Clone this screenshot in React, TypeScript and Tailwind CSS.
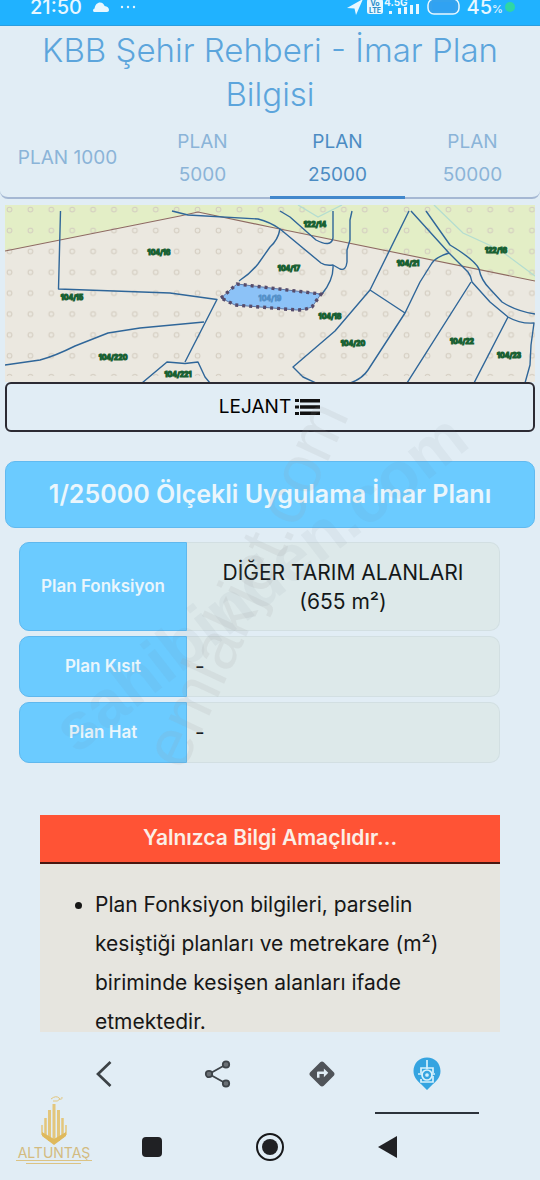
import { MdDirections } from 'react-icons/md';

const tabs = [
  { first: 'PLAN 1000', second: '' },
  { first: 'PLAN', second: '5000' },
  { first: 'PLAN', second: '25000', active: true },
  { first: 'PLAN', second: '50000' },
];

const rows = [
  { label: 'Plan Kısıt', value: '-' },
  { label: 'Plan Hat', value: '-' },
];

const parcelLabels = [
  { x: 159, y: 252, t: '104/16' },
  { x: 72, y: 297, t: '104/15' },
  { x: 113, y: 357, t: '104/220' },
  { x: 178, y: 374, t: '104/221' },
  { x: 315, y: 224, t: '122/14' },
  { x: 289, y: 268, t: '104/17' },
  { x: 408, y: 263, t: '104/21' },
  { x: 496, y: 250, t: '122/16' },
  { x: 330, y: 316, t: '104/18' },
  { x: 353, y: 343, t: '104/20' },
  { x: 462, y: 341, t: '104/22' },
  { x: 509, y: 355, t: '104/23' },
];

function StatusBar() {
  return (
    <header className="flex h-[26px] shrink-0 items-start justify-between overflow-hidden border-b border-[#2a9ee0] bg-[#20b2ff] pl-[30px] pr-[25px] text-[#e8f7ff]">
      <div className="-mt-1 flex h-[22px] items-center gap-[10px]">
        <span className="text-[20px] font-medium leading-[22px]">21:50</span>
        <svg width="18" height="12" viewBox="0 0 18 12" fill="currentColor" aria-hidden="true">
          <path d="M2.5 11C.7 11 .4 8.2 2.6 7.500 3 3.800 5.500 1.500 8 1.500c2.300 0 4 1.500 4.600 3.600 2.600.2 4.400 2 4.400 4 0 1.200-.8 1.900-2 1.900z" />
        </svg>
        <svg width="16" height="4" viewBox="0 0 16 4" fill="currentColor" aria-hidden="true">
          <circle cx="2" cy="2" r="1.200" />
          <circle cx="8" cy="2" r="1.200" />
          <circle cx="14" cy="2" r="1.200" />
        </svg>
      </div>
      <div className="-mt-1 flex h-[22px] items-center">
        <svg width="76" height="22" viewBox="0 0 76 22" fill="currentColor" aria-hidden="true">
          <path d="M0 12 16 3 9 19 7.500 12.500z" />
          <rect x="20" y="3" width="16" height="15" rx="2.500" />
          <text x="28" y="10" fontSize="7" fontWeight="700" textAnchor="middle" fill="#268cc8">Vo</text>
          <text x="28" y="17" fontSize="7" fontWeight="700" textAnchor="middle" fill="#268cc8">LTE</text>
          <text x="37" y="10" fontSize="10" fontWeight="700">4.5G</text>
          <rect x="42" y="15" width="3" height="3" />
          <rect x="51" y="12" width="3" height="6" />
          <rect x="57" y="11" width="3" height="7" />
          <rect x="63" y="9" width="3" height="9" />
          <rect x="69" y="8" width="3" height="10" />
        </svg>
        <svg width="34" height="18" viewBox="0 0 34 18" className="ml-1" aria-hidden="true">
          <rect x="1" y="1" width="31" height="15" rx="6" fill="#35a3ee" stroke="currentColor" strokeWidth="1.500" />
          <rect x="5" y="4" width="23" height="9" rx="3" fill="#30a2f2" />
        </svg>
        <span className="ml-[6px] text-[20px] font-medium leading-[22px]">45</span>
        <span className="mt-1 text-[11px] font-medium">%</span>
        <span className="ml-[2px] size-[10px] rounded-full bg-[#2fd6a5]" />
      </div>
    </header>
  );
}

function PlanMap() {
  return (
    <svg viewBox="5 205 530 177" className="block w-full" role="img" aria-label="İmar plan haritası">
      <defs>
        <pattern id="dots" x="-1" y="199" width="20.900" height="20.900" patternUnits="userSpaceOnUse">
          <circle cx="10.500" cy="10.500" r="2.400" fill="none" stroke="#d3ccc0" strokeWidth="1" />
        </pattern>
      </defs>
      <rect x="5" y="205" width="530" height="178" fill="#ebe8e0" />
      <path d="M5 205H535V281L270 227 198 212 5 251z" fill="#e3eec6" />
      <rect x="5" y="205" width="530" height="171" fill="url(#dots)" />
      <path d="M298 205 318 217 342 205M434 205 463 233 500 250 535 276" fill="none" stroke="#b4ddd0" strokeWidth="1.300" />
      <path d="M5 251 180 216 198 212 270 227 535 281" fill="none" stroke="#8e6a62" strokeWidth="1.100" />
      <g fill="none" stroke="#2f6699" strokeWidth="1.400" strokeLinejoin="round">
        <path d="M60.500 211 58.500 289 170 293 217 299.500 185 362" />
        <path d="M204 322 140 328 108 333 75 346Q55 356 40 360L5 365" />
        <path d="M142 383 167 362 185 363.500 198 362 205 377 210 383" />
        <path d="M172 211 188 215 258 219Q270 222 280 229L321 263Q325 266 333 265L340 269Q346 271 347 262V250L350 240V220L352 211" />
        <path d="M280 229Q278 240 270 247L258 264Q250 274 239 281" />
        <path d="M280 211 290 217 316 240Q331 248 333 238V211M333 265Q334 279 322 294" />
        <path d="M409 211 370 290 335 331 293 367 303 377 316 383M370 290 405 313" />
        <path d="M411 211 449 253 468 272Q471 276 472 282L490 302 508 317Q520 324 534 323L531 345 530 365 525 383" />
        <path d="M449 253Q436 257 432 263L420 282 405 313 368 370Q362 379 350 383" />
        <path d="M426 211 450 245Q475 260 479 269 481 280 490 289L502 302Q516 311 535 314" />
        <path d="M471 282 407 383M508 317 474 383" />
      </g>
      <path d="M221 298 237 284 321 294 312 307Q305 310 297 310L235 305z" fill="#8cc2f7" stroke="#6079a8" strokeWidth="1" />
      <path d="M221 298 237 284 321 294 312 307Q305 310 297 310L235 305z" fill="none" stroke="#564c6b" strokeWidth="3.400" strokeDasharray="3 4" />
      <text x="270" y="301" textAnchor="middle" fontSize="7" fontWeight="700" fill="#5490c8" stroke="#5490c8" strokeWidth=".8">104/19</text>
      <g fontSize="7" fontWeight="700" textAnchor="middle" fill="#174f2c" stroke="#1a6133" strokeWidth="1.200">
        {parcelLabels.map((p) => (
          <text key={p.t} x={p.x} y={p.y + 3}>{p.t}</text>
        ))}
      </g>
    </svg>
  );
}

function Watermark() {
  return (
    <svg
      viewBox="0 0 540 1180"
      className="pointer-events-none absolute left-0 top-0 w-full font-['Liberation_Sans',sans-serif]"
      aria-hidden="true"
    >
      <text transform="translate(76 755) rotate(-38)" fontSize="66" fontWeight="700" fill="#70808a" fillOpacity=".07">sahibinden.com</text>
      <text transform="translate(183 772) rotate(-65)" fontSize="67" fill="#9c9a9c" fillOpacity=".13">emlakjet.com</text>
    </svg>
  );
}

function CompanyLogo() {
  return (
    <svg width="80" height="72" viewBox="0 0 80 72" className="absolute bottom-[14px] left-[14px]" role="img" aria-label="Altuntaş">
      <g fill="none" stroke="#e3c67c">
        <path d="M37 5Q42 1 45 4T48 3M39 7Q44 8 46 5" strokeWidth="1" />
        <path d="M40 10V48M35.500 16V47M44.500 16V47" strokeWidth="3" />
        <path d="M31.500 24V44M48.500 24V44" strokeWidth="2.500" />
        <path d="M28 31V41M52 31V41" strokeWidth="1.500" />
      </g>
      <path d="M28 38 40 45 52 38V42L40 51 28 42z" fill="#dfb95c" />
      <text x="40" y="64" textAnchor="middle" fontSize="14" fill="#d3bb80">ALTUNTAŞ</text>
      <path d="M2 66.500H78M12 69.500H67" stroke="#dbc384" strokeWidth="1.200" />
    </svg>
  );
}

function BottomBar() {
  const tab = 'flex h-[82px] items-center justify-center border-b-2 pt-1';
  return (
    <footer className="relative shrink-0 bg-[#e1edf5]">
      <nav className="grid grid-cols-4 px-[61px]">
        <button type="button" aria-label="Geri" className={`${tab} border-transparent pr-[18px]`}>
          <svg width="18" height="28" viewBox="0 0 18 28" fill="none" stroke="#3c4246" strokeWidth="2.700" aria-hidden="true">
            <path d="M15.500 2 3 14 15.500 26" />
          </svg>
        </button>
        <button type="button" aria-label="Paylaş" className={`${tab} border-transparent`}>
          <svg width="28" height="28" viewBox="0 0 28 28" stroke="#3e4449" strokeWidth="1.800" aria-hidden="true">
            <path d="M22 4.500 5 14 22 23.500" fill="none" />
            <circle cx="22" cy="4.500" r="3.200" fill="#6a7075" />
            <circle cx="5" cy="14" r="3.200" fill="#6a7075" />
            <circle cx="22" cy="23.500" r="3.200" fill="#6a7075" />
          </svg>
        </button>
        <button type="button" aria-label="Yol tarifi" className={`${tab} border-transparent`}>
          <MdDirections className="size-[30px] text-[#505459]" />
        </button>
        <button type="button" aria-label="İmar planı" className={`${tab} border-[#2c333b]`}>
          <svg width="28" height="34" viewBox="0 0 28 34" aria-hidden="true">
            <path d="M14 0.500C6.300.5.500 6.300.5 14c0 6 3.800 10 8 13.500L14 33l5.500-5.500c4.200-3.500 8-7.500 8-13.500C27.500 6.300 21.700.5 14 .5z" fill="#35a4e0" />
            <g fill="none" stroke="#d6f1fc" strokeWidth="1.700">
              <path d="M14 3V12M8 16V11H20V16M20 19V25H8V22M5 17H10M18 17H22" />
              <circle cx="14" cy="18" r="5" />
              <circle cx="14" cy="18" r="1" />
            </g>
          </svg>
        </button>
      </nav>
      <div className="flex h-[66px] items-center justify-center gap-[94px]">
        <button type="button" aria-label="Son uygulamalar" className="size-5 rounded-[4px] bg-[#202124]" />
        <button type="button" aria-label="Ana ekran" className="flex size-[28px] items-center justify-center rounded-full border-2 border-[#17181a]">
          <span className="size-4 rounded-full bg-[#202124]" />
        </button>
        <button type="button" aria-label="Geri dön">
          <svg width="20" height="24" viewBox="0 0 20 24" aria-hidden="true">
            <path d="M0 12 19 1V23z" fill="#202124" />
          </svg>
        </button>
      </div>
      <CompanyLogo />
    </footer>
  );
}

export default function App() {
  const th = "w-[168px] rounded-l-[10px] border border-[#5fb8ee] bg-[#6bcbff] px-2 text-[17px] font-semibold text-[#eaf6fc]";
  const td = 'rounded-r-[10px] border border-l-0 border-[#d2dfe2] bg-[#dde9ea] px-2 text-[21px] text-[#141819]';
  return (
    <div className="relative flex h-screen flex-col overflow-hidden bg-[#e1edf5] font-['Inter',sans-serif]">
      <StatusBar />
      <main className="min-h-0 flex-1 overflow-hidden">
        <section className="rounded-b-[8px] border-b-2 border-[#a5b8d3]">
          <h1 className="px-5 pb-[7px] pt-[2px] text-center text-[33px] font-light leading-[44px] text-[#5ca5dc]">
            KBB Şehir Rehberi - İmar Plan Bilgisi
          </h1>
          <div role="tablist" className="-mb-[2px] grid grid-cols-4">
            {tabs.map((t) => (
              <button
                key={t.first + t.second}
                type="button"
                role="tab"
                aria-selected={!!t.active}
                className={
                  t.active
                    ? 'h-[76px] border-b-[3px] border-[#4288cc] px-2 pb-1 text-[19px] leading-[33px] text-[#4c8cc3]'
                    : 'h-[76px] border-b-[3px] border-transparent px-2 pb-1 text-[19px] leading-[33px] text-[#8bb4d8]'
                }
              >
                {t.first}
                {t.second && <br />}
                {t.second}
              </button>
            ))}
          </div>
        </section>

        <section className="px-[5px] pt-[6px]">
          <PlanMap />
          <button type="button" className="flex h-[50px] w-full items-center justify-center gap-1 rounded-[6px] border-2 border-[#2c2b33] text-[19px] text-black">
            LEJANT
            <svg width="26" height="18" viewBox="0 0 26 18" fill="#111" aria-hidden="true">
              <path d="M0 1h4v3H0zM0 7.500h4v3H0zM0 14h4v3H0zM5 1h20v3.500H5zM5 7.200h20v3.500H5zM5 13.500h20v3.500H5z" />
            </svg>
          </button>
        </section>

        <section className="px-[5px] pt-[29px]">
          <h2 className="rounded-[10px] border border-[#61baf0] bg-[#6bcbff] py-4 text-center text-[25px] font-semibold leading-[33px] text-[#eaf6fc]">
            1/25000 Ölçekli Uygulama İmar Planı
          </h2>
        </section>

        <section className="pl-[19px] pr-10 pt-[9px]">
          <table className="w-full border-separate border-spacing-x-0 border-spacing-y-[5px]">
            <tbody>
              <tr className="h-[89px]">
                <th scope="row" className={th}>Plan Fonksiyon</th>
                <td className={`${td} text-center leading-[29px]`}>
                  DİĞER TARIM ALANLARI
                  <br />
                  (655 m²)
                </td>
              </tr>
              {rows.map((r) => (
                <tr key={r.label} className="h-[61px]">
                  <th scope="row" className={th}>{r.label}</th>
                  <td className={td}>{r.value}</td>
                </tr>
              ))}
            </tbody>
          </table>
        </section>

        <section className="px-10 pt-[47px]">
          <h3 className="border-b-2 border-[#4a1710] bg-[#ff5335] pb-[9px] pt-[8px] text-center text-[21px] font-semibold leading-[30px] text-[#fbeee6]">
            Yalnızca Bilgi Amaçlıdır...
          </h3>
          <div className="bg-[#e6e5df] pb-6 pl-[55px] pr-12 pt-[21px]">
            <ul className="list-disc text-[21px] leading-[39px] text-[#171717]">
              <li>Plan Fonksiyon bilgileri, parselin kesiştiği planları ve metrekare (m²) biriminde kesişen alanları ifade etmektedir.</li>
            </ul>
          </div>
        </section>
      </main>
      <BottomBar />
      <Watermark />
    </div>
  );
}
